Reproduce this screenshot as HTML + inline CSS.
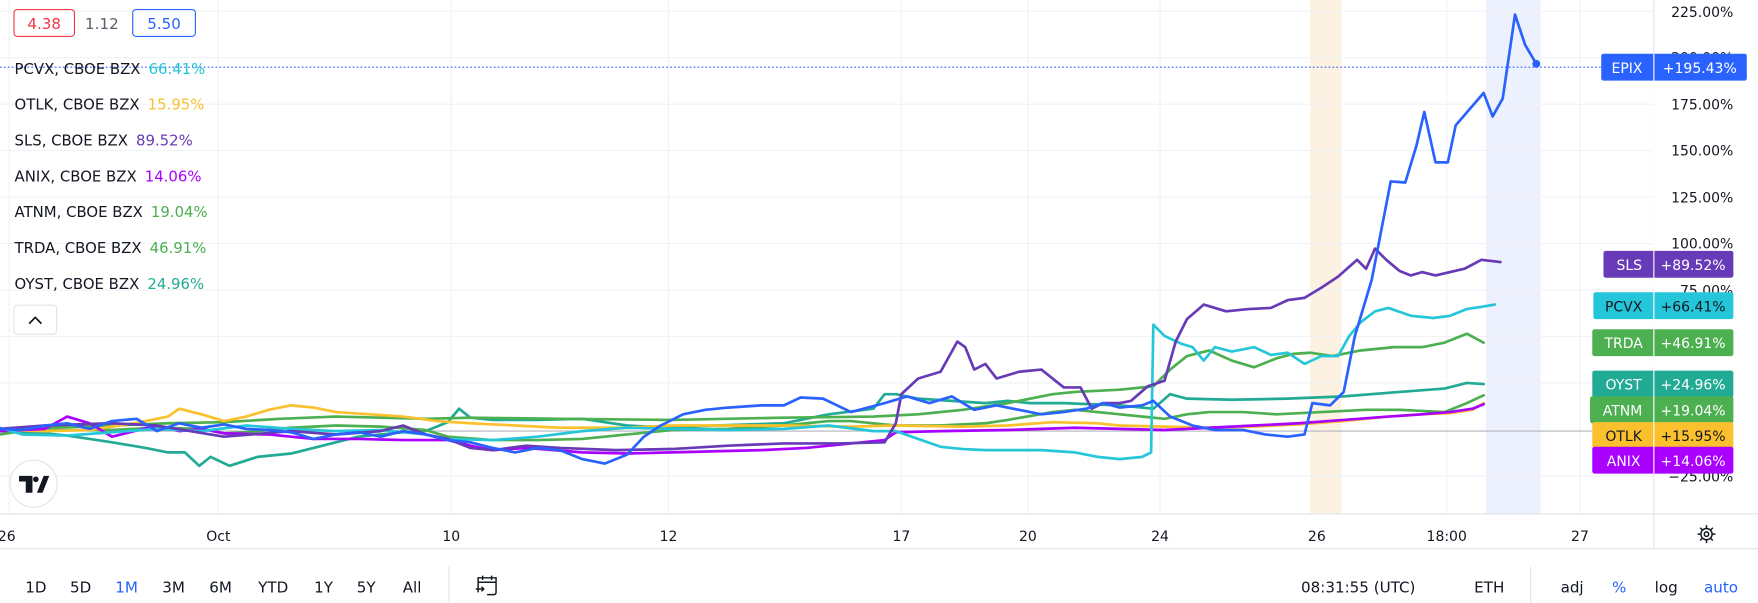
<!DOCTYPE html>
<html><head><meta charset="utf-8"><style>
html,body{margin:0;padding:0;background:#fff;width:1758px;height:603px;overflow:hidden}
svg{display:block}
text{font-family:"DejaVu Sans","Liberation Sans",sans-serif}
</style></head><body>
<svg width="1758" height="603" viewBox="0 0 1570 538.5" preserveAspectRatio="none" xmlns="http://www.w3.org/2000/svg">
<rect width="1570" height="538.5" fill="#fff"/>
<rect x="1170" y="0" width="28" height="459" fill="#fdf1e2"/>
<rect x="1327" y="0" width="49" height="459" fill="#edf1fd"/>
<g stroke="#f0f2f5" stroke-width="1">
<line x1="0" y1="10" x2="1477" y2="10"/><line x1="0" y1="51.5" x2="1477" y2="51.5"/><line x1="0" y1="93" x2="1477" y2="93"/><line x1="0" y1="134.5" x2="1477" y2="134.5"/><line x1="0" y1="176" x2="1477" y2="176"/><line x1="0" y1="217.5" x2="1477" y2="217.5"/><line x1="0" y1="259" x2="1477" y2="259"/><line x1="0" y1="300.5" x2="1477" y2="300.5"/><line x1="0" y1="342" x2="1477" y2="342"/><line x1="0" y1="425" x2="1477" y2="425"/>
<line x1="8" y1="0" x2="8" y2="459"/><line x1="195" y1="0" x2="195" y2="459"/><line x1="403" y1="0" x2="403" y2="459"/><line x1="597" y1="0" x2="597" y2="459"/><line x1="805" y1="0" x2="805" y2="459"/><line x1="918" y1="0" x2="918" y2="459"/><line x1="1036" y1="0" x2="1036" y2="459"/><line x1="1176" y1="0" x2="1176" y2="459"/><line x1="1292" y1="0" x2="1292" y2="459"/><line x1="1411" y1="0" x2="1411" y2="459"/>
</g>
<line x1="0" y1="385" x2="1477" y2="385" stroke="#b2b5be" stroke-width="1"/>
<line x1="0" y1="60" x2="1430" y2="60" stroke="#2962ff" stroke-width="1" stroke-dasharray="1.5,2"/>
<g fill="none" stroke-width="2.4" stroke-linejoin="round" stroke-linecap="round">
<polyline stroke="#22ab94" points="0,385 20,386 40,387 60,389 80,392 100,395 130,400 150,404 165,404 178,416 188,408 205,416 230,408 260,405 280,400 300,395 320,390 340,388 360,386 380,385 400,377 410,365 420,373 440,375 480,375 520,374 560,380 600,382 640,380 700,378 740,370 780,365 790,352 800,352 820,356 850,358 880,360 900,358 920,360 950,360 1000,362 1030,365 1045,352 1060,356 1100,357 1150,356 1200,354 1250,350 1290,347 1310,342 1325,343"/>
<polyline stroke="#4caf50" points="0,385 40,384 100,384 140,382 180,383 200,387 220,386 260,382 300,380 340,381 380,384 400,390 440,393 480,393 520,392 560,388 600,384 650,383 700,380 740,376 760,376 780,378 800,380 840,380 880,378 900,375 940,368 960,366 1000,370 1040,374 1060,370 1080,368 1110,368 1140,370 1180,368 1220,366 1250,366 1290,368 1310,360 1325,353"/>
<polyline stroke="#4caf50" points="0,388 40,382 100,380 150,378 200,377 250,374 300,372 380,374 420,373 500,374 600,375 700,373 780,372 820,370 860,366 900,360 940,352 960,350 1000,348 1030,345 1045,330 1060,318 1080,313 1100,322 1120,328 1140,320 1155,316 1170,315 1190,318 1215,313 1245,310 1270,310 1290,306 1310,298 1325,306"/>
<polyline stroke="#fbc02d" points="0,384 40,385 80,384 120,378 150,372 160,365 180,370 200,376 220,372 240,366 260,362 280,364 300,368 330,370 360,372 390,376 420,378 460,380 500,382 560,382 600,380 640,380 700,380 760,381 800,380 860,381 900,380 940,377 980,378 1000,380 1040,381 1080,382 1120,381 1160,379 1200,376 1240,372 1270,370 1295,369 1315,366 1325,360"/>
<polyline stroke="#aa00ff" points="0,385 20,384 40,383 60,372 80,378 100,390 120,385 140,380 160,385 180,383 200,387 240,388 280,392 320,392 360,393 400,393 420,398 440,402 470,400 520,404 560,405 600,404 640,403 680,402 720,400 760,396 790,393 800,386 840,385 900,384 960,382 1000,383 1040,384 1080,382 1120,380 1160,378 1200,375 1240,372 1270,370 1295,368 1315,365 1325,361"/>
<polyline stroke="#26c6da" points="0,382 20,388 60,389 100,386 140,383 180,385 220,380 260,383 300,385 340,384 380,388 400,392 440,393 480,390 520,385 560,382 600,383 650,384 700,383 740,380 780,385 800,385 820,392 840,399 860,401 880,402 900,402 930,402 960,404 980,408 1000,410 1020,408 1028,404 1030,290 1040,300 1055,307 1065,310 1075,322 1085,310 1100,314 1120,310 1135,317 1150,315 1165,325 1180,318 1195,318 1205,300 1215,288 1228,278 1240,275 1260,282 1280,284 1295,282 1310,276 1323,274 1335,272"/>
<polyline stroke="#673ab7" points="0,383 40,380 100,378 140,380 200,390 260,385 300,388 340,385 360,380 380,388 400,392 420,400 440,402 470,398 500,400 550,402 600,401 650,398 700,396 750,396 790,395 800,378 805,352 820,338 840,332 855,305 862,310 870,330 880,325 890,338 910,332 930,330 950,346 965,346 975,365 985,360 1000,360 1010,358 1025,345 1040,340 1050,305 1060,285 1075,272 1095,278 1115,276 1135,275 1150,268 1165,266 1180,257 1195,247 1212,232 1220,240 1228,222 1238,232 1250,242 1260,246 1270,243 1282,246 1295,243 1308,240 1323,232 1340,234"/>
<polyline stroke="#2962ff" points="0,383 20,384 40,380 60,378 80,383 100,376 122,374 140,385 160,378 180,382 200,379 220,383 240,384 260,386 280,392 300,388 320,386 340,390 360,385 380,388 400,393 420,395 440,400 460,404 480,400 500,402 520,410 540,414 560,406 575,390 590,380 610,370 630,366 650,364 680,362 700,362 715,355 735,356 760,368 790,360 810,354 830,360 850,354 870,366 890,362 910,366 930,370 950,368 970,365 985,360 1000,364 1020,362 1030,358 1045,372 1065,380 1085,384 1110,384 1130,388 1150,390 1165,388 1172,360 1188,362 1200,350 1210,300 1225,250 1242,162 1255,163 1265,130 1272,100 1282,145 1293,145 1300,112 1312,98 1325,83 1333,104 1342,88 1353,13 1362,40 1372,57"/>
</g>
<circle cx="1372" cy="57" r="3.5" fill="#2962ff"/>
<line x1="1477" y1="0" x2="1477" y2="490" stroke="#e0e3eb"/>
<line x1="0" y1="459" x2="1570" y2="459" stroke="#e0e3eb"/>
<line x1="0" y1="490" x2="1570" y2="490" stroke="#e0e3eb"/>
<g font-size="12.5" fill="#131722" text-anchor="end">
<text x="1548" y="15">225.00%</text><text x="1548" y="56">200.00%</text><text x="1548" y="98">175.00%</text><text x="1548" y="139">150.00%</text><text x="1548" y="181">125.00%</text><text x="1548" y="222">100.00%</text><text x="1548" y="264">75.00%</text><text x="1548" y="430">−25.00%</text>
</g>
<g font-size="12.5">
<rect x="1430" y="48" width="130" height="24" rx="2" fill="#2962ff"/>
<rect x="1432" y="224" width="116" height="24" rx="2" fill="#673ab7"/>
<rect x="1423" y="261" width="125" height="24" rx="2" fill="#26c6da"/>
<rect x="1422" y="294" width="126" height="24" rx="2" fill="#4caf50"/>
<rect x="1422" y="331" width="126" height="24" rx="2" fill="#22ab94"/>
<rect x="1420" y="354" width="128" height="24" rx="2" fill="#4caf50"/>
<rect x="1422" y="377" width="126" height="24" rx="2" fill="#fbc02d"/>
<rect x="1422" y="399" width="126" height="24" rx="2" fill="#aa00ff"/>
<g text-anchor="middle">
<text x="1453" y="65" fill="#fff">EPIX</text><text x="1518" y="65" fill="#fff">+195.43%</text>
<text x="1455" y="241" fill="#fff">SLS</text><text x="1512" y="241" fill="#fff">+89.52%</text>
<text x="1450" y="278" fill="#131722">PCVX</text><text x="1512" y="278" fill="#131722">+66.41%</text>
<text x="1450" y="311" fill="#fff">TRDA</text><text x="1512" y="311" fill="#fff">+46.91%</text>
<text x="1450" y="348" fill="#fff">OYST</text><text x="1512" y="348" fill="#fff">+24.96%</text>
<text x="1449" y="371" fill="#fff">ATNM</text><text x="1512" y="371" fill="#fff">+19.04%</text>
<text x="1450" y="394" fill="#131722">OTLK</text><text x="1512" y="394" fill="#131722">+15.95%</text>
<text x="1450" y="416" fill="#fff">ANIX</text><text x="1512" y="416" fill="#fff">+14.06%</text>
</g>
<line x1="1477" y1="48" x2="1477" y2="423" stroke="#fff" stroke-width="1"/>
</g>
<rect x="12.5" y="8.5" width="54" height="24" rx="3" fill="#fff" stroke="#f23645"/>
<text x="39.5" y="26" font-size="13.5" fill="#f23645" text-anchor="middle">4.38</text>
<text x="91" y="26" font-size="13.5" fill="#5d606b" text-anchor="middle">1.12</text>
<rect x="118.5" y="8.5" width="56" height="24" rx="3" fill="#fff" stroke="#2962ff"/>
<text x="146.5" y="26" font-size="13.5" fill="#2962ff" text-anchor="middle">5.50</text>
<g font-size="13.3" fill="#131722">
<text x="13" y="66">PCVX, CBOE BZX <tspan fill="#26c6da" dx="3">66.41%</tspan></text>
<text x="13" y="98">OTLK, CBOE BZX <tspan fill="#fbc02d" dx="3">15.95%</tspan></text>
<text x="13" y="130">SLS, CBOE BZX <tspan fill="#673ab7" dx="3">89.52%</tspan></text>
<text x="13" y="162">ANIX, CBOE BZX <tspan fill="#aa00ff" dx="3">14.06%</tspan></text>
<text x="13" y="194">ATNM, CBOE BZX <tspan fill="#4caf50" dx="3">19.04%</tspan></text>
<text x="13" y="226">TRDA, CBOE BZX <tspan fill="#4caf50" dx="3">46.91%</tspan></text>
<text x="13" y="258">OYST, CBOE BZX <tspan fill="#22ab94" dx="3">24.96%</tspan></text>
</g>
<rect x="12.5" y="272.5" width="38" height="26" rx="3" fill="#fff" stroke="#e0e3eb"/>
<path d="M26 289 L31.5 283.5 L37 289" fill="none" stroke="#131722" stroke-width="1.5"/>
<circle cx="30" cy="432" r="21" fill="#fff" stroke="#e0e3eb"/>
<path d="M17 425 H29 V440 H23 V430 H17 Z M33 440 L39 425 H44 L38 440 Z" fill="#131722"/>
<circle cx="32" cy="428" r="2.5" fill="#131722"/>
<g font-size="12.5" fill="#131722" text-anchor="middle">
<text x="6" y="483">26</text><text x="195" y="483">Oct</text><text x="403" y="483">10</text><text x="597" y="483">12</text><text x="805" y="483">17</text><text x="918" y="483">20</text><text x="1036" y="483">24</text><text x="1176" y="483">26</text><text x="1292" y="483">18:00</text><text x="1411" y="483">27</text>
</g>
<g transform="translate(1524,477)" fill="none" stroke="#131722" stroke-width="1.3">
<circle r="5"/><circle r="2"/>
<path d="M0 -8 V-5 M0 5 V8 M-8 0 H-5 M5 0 H8 M-5.7 -5.7 L-3.5 -3.5 M3.5 3.5 L5.7 5.7 M5.7 -5.7 L3.5 -3.5 M-3.5 3.5 L-5.7 5.7"/>
</g>
<g font-size="13.5" fill="#131722" text-anchor="middle">
<text x="32" y="529">1D</text><text x="72" y="529">5D</text><text x="113" y="529" fill="#2962ff">1M</text><text x="155" y="529">3M</text><text x="197" y="529">6M</text><text x="244" y="529">YTD</text><text x="289" y="529">1Y</text><text x="327" y="529">5Y</text><text x="368" y="529">All</text>
<text x="1213" y="529">08:31:55 (UTC)</text><text x="1330" y="529">ETH</text>
<text x="1404" y="529">adj</text><text x="1446" y="529" fill="#2962ff">%</text><text x="1488" y="529">log</text><text x="1537" y="529" fill="#2962ff">auto</text>
</g>
<line x1="401" y1="506" x2="401" y2="538" stroke="#e0e3eb"/>
<line x1="1367" y1="506" x2="1367" y2="538" stroke="#e0e3eb"/>
<g transform="translate(425,513)" fill="none" stroke="#131722" stroke-width="1.3">
<path d="M2 16 V3 H18 V16 Q18 18 16 18 H10 M2 7 H18 M6 1 V5 M14 1 V5 M0 13 H7 M5 11 L7 13 L5 15"/>
</g>
</svg>
</body></html>
